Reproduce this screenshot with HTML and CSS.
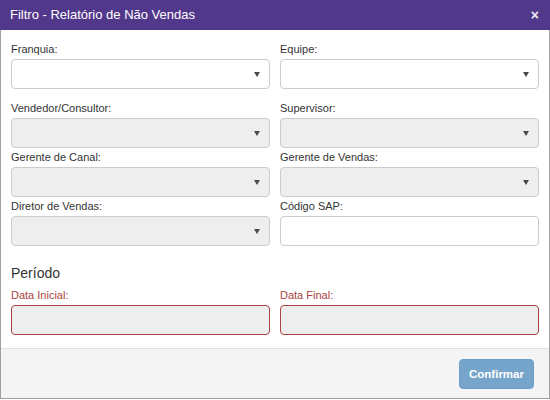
FILE: index.html
```html
<!DOCTYPE html>
<html lang="pt-BR">
<head>
<meta charset="utf-8">
<title>Filtro - Relatório de Não Vendas</title>
<link rel="stylesheet" href="styles.css">
</head>
<body>
<div class="dialog">
  <div class="header">
    <span class="title">Filtro - Relatório de Não Vendas</span>
    <span class="close">×</span>
  </div>
  <div class="frame">
    <div class="body">
      <div class="row first">
        <div class="group">
          <div class="label">Franquia:</div>
          <div class="control select"><span class="caret"></span></div>
        </div>
        <div class="group">
          <div class="label">Equipe:</div>
          <div class="control select"><span class="caret"></span></div>
        </div>
      </div>
      <div class="row">
        <div class="group">
          <div class="label">Vendedor/Consultor:</div>
          <div class="control select disabled"><span class="caret"></span></div>
        </div>
        <div class="group">
          <div class="label">Supervisor:</div>
          <div class="control select disabled"><span class="caret"></span></div>
        </div>
      </div>
      <div class="row">
        <div class="group">
          <div class="label">Gerente de Canal:</div>
          <div class="control select disabled"><span class="caret"></span></div>
        </div>
        <div class="group">
          <div class="label">Gerente de Vendas:</div>
          <div class="control select disabled"><span class="caret"></span></div>
        </div>
      </div>
      <div class="row">
        <div class="group">
          <div class="label">Diretor de Vendas:</div>
          <div class="control select disabled"><span class="caret"></span></div>
        </div>
        <div class="group">
          <div class="label">Código SAP:</div>
          <div class="control"></div>
        </div>
      </div>
      <div class="section">Período</div>
      <div class="row">
        <div class="group error">
          <div class="label">Data Inicial:</div>
          <div class="control disabled"></div>
        </div>
        <div class="group error">
          <div class="label">Data Final:</div>
          <div class="control disabled"></div>
        </div>
      </div>
    </div>
    <div class="footer">
      <button class="btn" disabled>Confirmar</button>
    </div>
  </div>
</div>
</body>
</html>
```
FILE: styles.css
```css
html, body {
  margin: 0;
  padding: 0;
  background: #fff;
}
body {
  font-family: "Liberation Sans", Arial, sans-serif;
  color: #333;
}
.dialog {
  width: 550px;
  height: 399px;
  display: flex;
  flex-direction: column;
}
.header {
  height: 30px;
  background: #52388a;
  color: #fff;
  display: flex;
  align-items: center;
  justify-content: space-between;
  padding: 0 11px 0 10px;
  flex: none;
}
.title {
  font-size: 13px;
  line-height: 30px;
}
.close {
  font-size: 14px;
  font-weight: bold;
  line-height: 30px;
  opacity: 0.9;
}
.frame {
  flex: 1;
  display: flex;
  flex-direction: column;
  border: 1px solid #a0a0a0;
  border-top: none;
}
.body {
  flex: 1;
  padding: 12px 10px 0 10px;
}
.row {
  display: grid;
  grid-template-columns: 1fr 1fr;
  column-gap: 10px;
  margin-bottom: 2px;
}
.row.first {
  margin-bottom: 12px;
}
.label {
  font-size: 11px;
  line-height: 15px;
  margin-bottom: 2px;
  color: #333;
}
.control {
  height: 30px;
  box-sizing: border-box;
  border: 1px solid #ccc;
  border-radius: 4px;
  background: #fff;
  display: flex;
  align-items: center;
  justify-content: flex-end;
  padding-right: 9px;
}
.control.disabled {
  background: #eee;
}
.caret {
  width: 0;
  height: 0;
  margin-top: 1px;
  border-left: 3px solid transparent;
  border-right: 3px solid transparent;
  border-top: 5px solid #4a4a4a;
}
.section {
  font-size: 14px;
  line-height: 20px;
  margin-top: 17px;
  margin-bottom: 5px;
  color: #333;
}
.error .label {
  color: #a94442;
}
.error .control {
  border-color: #a94442;
}
.footer {
  flex: none;
  border-top: 1px solid #e0e0e0;
  background: #f4f4f4;
  height: 50px;
  box-sizing: border-box;
  padding: 10px 15px 10px 0;
  display: flex;
  justify-content: flex-end;
}
.btn {
  width: 75px;
  height: 30px;
  border: 1px solid #6f9fc9;
  border-radius: 4px;
  background: #76a5cc;
  color: #fff;
  font-family: "Liberation Sans", Arial, sans-serif;
  font-weight: bold;
  font-size: 11.5px;
  padding: 0;
}
```
